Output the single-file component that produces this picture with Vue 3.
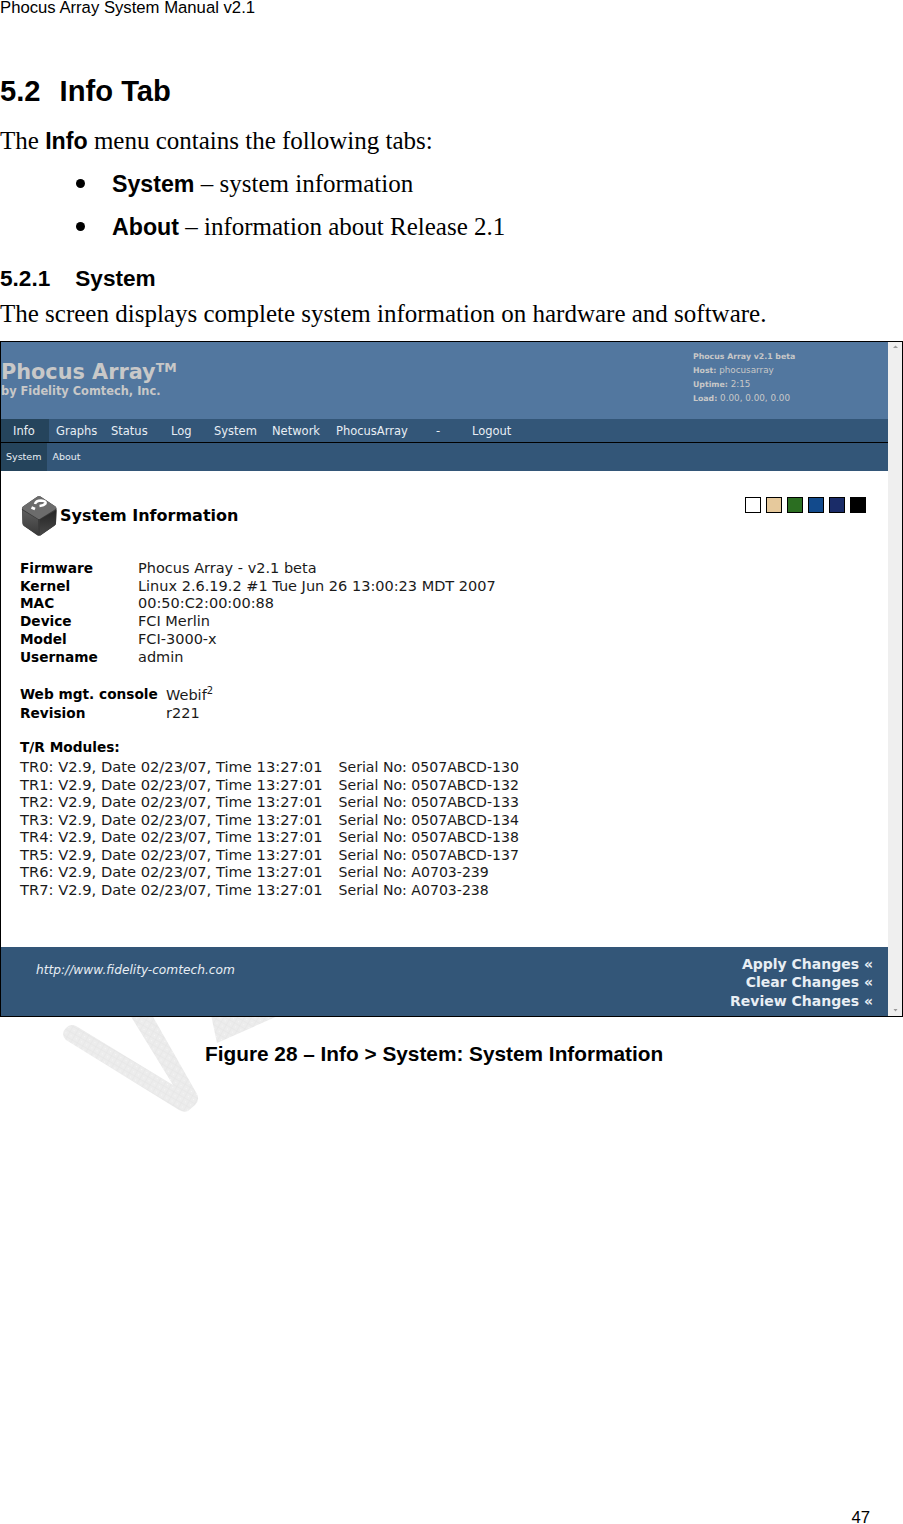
<script setup>
const nav = [
  { label: 'Info', width: 48, active: true },
  { label: 'Graphs', width: 55 },
  { label: 'Status', width: 60 },
  { label: 'Log', width: 43 },
  { label: 'System', width: 58 },
  { label: 'Network', width: 64 },
  { label: 'PhocusArray', width: 100 },
  { label: '-', width: 36 },
  { label: 'Logout', width: 60 }
]
const facts = [
  ['Firmware', 'Phocus Array - v2.1 beta'],
  ['Kernel', 'Linux 2.6.19.2 #1 Tue Jun 26 13:00:23 MDT 2007'],
  ['MAC', '00:50:C2:00:00:88'],
  ['Device', 'FCI Merlin'],
  ['Model', 'FCI-3000-x'],
  ['Username', 'admin']
]
const modules = [
  ['TR0', '0507ABCD-130'],
  ['TR1', '0507ABCD-132'],
  ['TR2', '0507ABCD-133'],
  ['TR3', '0507ABCD-134'],
  ['TR4', '0507ABCD-138'],
  ['TR5', '0507ABCD-137'],
  ['TR6', 'A0703-239'],
  ['TR7', 'A0703-238']
]
const swatches = ['#ffffff', '#e6c99c', '#2b6e21', '#124a8c', '#1a2c68', '#000000']
</script>

<template>
  <div class="page">
    <div class="running">Phocus Array System Manual v2.1</div>
    <h1 class="h1"><span>5.2</span><span>Info Tab</span></h1>
    <p class="body intro">The <b>Info</b> menu contains the following tabs:</p>
    <ul class="bullets">
      <li><b>System</b> – system information</li>
      <li><b>About</b> – information about Release 2.1</li>
    </ul>
    <h2 class="h2"><span>5.2.1</span><span>System</span></h2>
    <p class="body lead">The screen displays complete system information on hardware and software.</p>

    <div class="shot">
      <div class="app">
        <header class="banner">
          <div class="brand">
            <div class="brand-name">Phocus Array<sup>TM</sup></div>
            <div class="brand-by">by Fidelity Comtech, Inc.</div>
          </div>
          <div class="status">
            <div><b>Phocus Array v2.1 beta</b></div>
            <div><b>Host:</b> phocusarray</div>
            <div><b>Uptime:</b> 2:15</div>
            <div><b>Load:</b> 0.00, 0.00, 0.00</div>
          </div>
        </header>
        <nav class="nav">
          <span
            v-for="item in nav"
            :key="item.label"
            class="nav-item"
            :class="{ active: item.active }"
            :style="{ width: item.width + 'px' }"
          >{{ item.label }}</span>
        </nav>
        <nav class="subnav">
          <span class="sub-item active">System</span>
          <span class="sub-item">About</span>
        </nav>
        <main class="content">
          <div class="title-row">
            <div class="title">
              <svg class="cube" width="38" height="42" viewBox="0 0 38 42">
                <defs>
                  <linearGradient id="cubeLeft" x1="0" y1="0" x2="0" y2="1">
                    <stop offset="0" stop-color="#5e5e5e" />
                    <stop offset="1" stop-color="#383838" />
                  </linearGradient>
                  <linearGradient id="cubeRight" x1="0" y1="0" x2="0" y2="1">
                    <stop offset="0" stop-color="#242424" />
                    <stop offset="1" stop-color="#484848" />
                  </linearGradient>
                </defs>
                <path d="M16.500 1.500 Q18 1 19.500 1.500 L34.500 11.500 Q36 13 35.500 15 L35 28 Q35 30 33 31 L19.500 40.500 Q18 41 16.500 40.500 L3 31 Q1.500 30 1.500 28 L1 15 Q0.500 13 2 11.500 Z" fill="#3a3a3a" />
                <path d="M16.500 1.500 Q18 1 19.500 1.500 L34.500 11.500 Q36 13 34 14.500 L19.500 23.500 Q18 24.500 16.500 23.500 L2 14.500 Q0 13 2 11.500 Z" fill="#6c6c6c" />
                <path d="M1.200 15 L17 24.500 L17.500 40.500 L3 31 Q1.500 30 1.500 28 Z" fill="url(#cubeLeft)" />
                <path d="M19 24.500 L35.500 15 L35 28 Q35 30 33 31 L19 40.500 Z" fill="url(#cubeRight)" />
                <path d="M14 9 Q15 5.500 20 5.500 Q25.500 6 24.500 8.500 Q23 10.500 18.500 11" fill="none" stroke="#ffffff" stroke-width="2.600" />
                <path d="M10.500 12.500 L14 14" fill="none" stroke="#ffffff" stroke-width="2.800" />
              </svg>
              <span>System Information</span>
            </div>
            <div class="swatches">
              <i v-for="c in swatches" :key="c" :style="{ background: c }"></i>
            </div>
          </div>

          <div class="facts">
            <template v-for="f in facts" :key="f[0]">
              <b>{{ f[0] }}</b><span>{{ f[1] }}</span>
            </template>
          </div>

          <div class="facts web">
            <b>Web mgt. console</b><span class="webif">Webif<sup>2</sup></span>
            <b>Revision</b><span>r221</span>
          </div>

          <div class="modules">
            <b>T/R Modules:</b>
            <div v-for="m in modules" :key="m[0]" class="module">
              <span>{{ m[0] }}: V2.9, Date 02/23/07, Time 13:27:01</span>
              <span class="serial">Serial No: {{ m[1] }}</span>
            </div>
          </div>
        </main>
        <footer class="footer">
          <i class="url">http://www.fidelity-comtech.com</i>
          <div class="actions">
            <div>Apply Changes «</div>
            <div>Clear Changes «</div>
            <div>Review Changes «</div>
          </div>
        </footer>
      </div>
      <div class="scrollbar">
        <svg width="15" height="12" viewBox="0 0 15 12"><path d="M5 6 L10 6 L7.500 3.500 Z" fill="#9a9a9a" /></svg>
        <svg width="15" height="12" viewBox="0 0 15 12"><path d="M5.500 5 L9.500 5 L7.500 7.500 Z" fill="#9a9a9a" /></svg>
      </div>
    </div>

    <div class="caption">Figure 28 – Info &gt; System: System Information</div>
    <svg class="watermark" width="240" height="100" viewBox="60 1015 240 100">
      <defs>
        <pattern id="wmGrid" width="6" height="6" patternUnits="userSpaceOnUse" patternTransform="rotate(30)">
          <rect width="6" height="6" fill="#ececec" />
          <path d="M0 0 H6 M0 0 V6" stroke="#e5e5e5" stroke-width="1" />
          <rect x="3" y="3" width="1" height="1" fill="#f6f6f6" />
        </pattern>
      </defs>
      <path d="M66 1028 Q70 1023 76 1026 L173 1085 L130 1015 L152 1015 L197 1094 Q200 1100 195 1105 L188 1111 Q184 1113 179 1110 L66 1040 Q60 1034 66 1028 Z" fill="url(#wmGrid)" />
      <path d="M211 1015 L217 1043 L280 1015 Z" fill="url(#wmGrid)" />
    </svg>

    <div class="folio">47</div>
  </div>
</template>

<style>
html, body { margin: 0; background: #fff; }
</style>

<style scoped>
.page {
  position: relative;
  width: 903px;
  height: 1524px;
  overflow: hidden;
  display: flex;
  flex-direction: column;
  color: #000;
  font-family: "Liberation Serif", serif;
}
.running {
  font: 16.700px/16px "Liberation Sans", sans-serif;
}
.h1 {
  display: flex;
  gap: 19px;
  margin: 58px 0 0;
  font: bold 29.200px/34px "Liberation Sans", sans-serif;
}
.body { margin: 0; font-size: 25px; line-height: 30px; }
.body b, .bullets b { font-family: "Liberation Sans", sans-serif; font-size: 23.200px; }
.intro { margin-top: 18px; }
.bullets { list-style: none; margin: 0; padding: 0; font-size: 25px; line-height: 30px; }
.bullets li { position: relative; padding-left: 112px; margin-top: 13px; }
.bullets li::before {
  content: "";
  position: absolute;
  left: 76px;
  top: 10px;
  width: 9px;
  height: 9px;
  border-radius: 50%;
  background: #000;
}
.h2 {
  display: flex;
  gap: 25px;
  margin: 22px 0 0;
  font: bold 22.600px/30px "Liberation Sans", sans-serif;
}
.lead { margin-top: 5px; }
.shot {
  display: flex;
  box-sizing: border-box;
  height: 676px;
  margin-top: 12px;
  border: 1px solid #000;
  background: #fff;
  position: relative;
  z-index: 1;
}
.app { flex: 1; display: flex; flex-direction: column; min-width: 0; font-family: "DejaVu Sans", sans-serif; }
.banner {
  height: 77px;
  background: #52779f;
  display: flex;
  justify-content: space-between;
  color: #c8c8c8;
}
.brand-name { font: bold 20.800px/28px "DejaVu Sans", sans-serif; margin-top: 16px; }
.brand-name sup { font-size: 12.500px; line-height: 0; vertical-align: 7px; }
.brand-by { font: bold 11.400px/14px "DejaVu Sans", sans-serif; margin-top: -2px; }
.status { width: 195px; padding-top: 7px; font-size: 8.800px; line-height: 14px; }
.status b { font-size: 7.800px; line-height: 1; }
.nav { height: 23px; display: flex; background: #335678; border-bottom: 1px solid #000; color: #e8eef4; font-size: 11.500px; line-height: 24px; }
.nav-item { box-sizing: border-box; padding-left: 7px; white-space: nowrap; }
.nav-item:first-child { padding-left: 12px; }
.nav-item.active { background: #25445c; }
.subnav { height: 28px; display: flex; background: #335678; color: #e8eef4; font-size: 9.500px; line-height: 28px; }
.sub-item { padding: 0 6px 0 5px; }
.sub-item.active { background: #25445c; }
.content { flex: 1; color: #1a1a1a; font-size: 14.500px; line-height: 17.700px; padding: 0 20px 0 19px; }
.title-row { display: flex; justify-content: space-between; height: 89px; }
.title { display: flex; align-items: center; gap: 1px; height: 42px; margin: 24px 0 0 1px; font-size: 16px; font-weight: bold; color: #000; }
.cube { flex: none; }
.swatches { display: flex; gap: 5px; margin: 26px 2px 0 0; }
.swatches i { box-sizing: border-box; width: 16px; height: 16px; border: 1px solid #000; }
.facts { display: grid; grid-template-columns: 118px 1fr; }
.facts b, .modules > b { color: #000; font-size: 13.700px; }
.web { grid-template-columns: 146px 1fr; grid-auto-rows: 19px; margin-top: 20px; }
.webif { padding-top: 1px; }
.web sup { font-size: 10px; line-height: 0; }
.modules { margin-top: 15px; }
.modules > b { display: block; margin-bottom: 1px; }
.module { display: flex; align-items: baseline; gap: 16px; height: 17.600px; line-height: 17.600px; font-size: 14.700px; }
.serial { font-size: 14.100px; }
.footer {
  height: 69px;
  background: #335678;
  color: #e8eef4;
  display: flex;
  justify-content: space-between;
  align-items: flex-start;
  padding: 0 15px 0 35px;
}
.url { font-size: 12.200px; padding-top: 16px; }
.actions { text-align: right; font-size: 14px; font-weight: bold; line-height: 18.300px; padding-top: 8px; }
.scrollbar {
  width: 14px;
  background: #efefef;
  display: flex;
  flex-direction: column;
  justify-content: space-between;
}
.caption {
  margin-top: 25px;
  padding-left: 205px;
  font: bold 20.800px/24px "Liberation Sans", sans-serif;
  position: relative;
  z-index: 1;
}
.watermark { position: absolute; left: 60px; top: 1015px; }
.folio {
  position: absolute;
  right: 33px;
  bottom: 0;
  font: 16.700px/13px "Liberation Sans", sans-serif;
}
</style>
